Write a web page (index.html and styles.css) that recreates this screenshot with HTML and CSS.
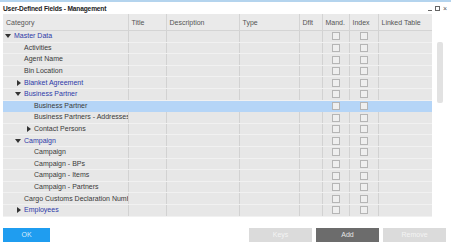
FILE: index.html
```html
<!DOCTYPE html>
<html lang="en">
<head>
    <meta charset="UTF-8">
    <meta name="viewport" content="width=device-width, initial-scale=1.0">
    <title>User-Defined Fields - Management</title>
    <link rel="stylesheet" href="styles.css">
</head>
<body>

<div class="titlebar">
    <span class="title">User-Defined Fields - Management</span>
    <span class="win-controls"><span class="wc-min"></span><span class="wc-max"></span><span class="wc-close">&#215;</span></span>
</div>

<div class="grid-area">
    <table class="udf-table">
        <colgroup>
            <col class="c-cat"><col class="c-title"><col class="c-desc"><col class="c-type">
            <col class="c-dflt"><col class="c-mand"><col class="c-index"><col class="c-linked">
        </colgroup>
        <thead>
            <tr>
                <th>Category</th><th>Title</th><th>Description</th><th>Type</th>
                <th>Dflt</th><th>Mand.</th><th>Index</th><th>Linked Table</th>
            </tr>
        </thead>
        <tbody>
            <tr><td class="cat lv0 parent"><span class="tg open"></span>Master Data</td><td></td><td></td><td></td><td></td><td class="ck"><span class="chk"></span></td><td class="ck"><span class="chk"></span></td><td></td></tr>
            <tr><td class="cat lv1"><span class="tg"></span>Activities</td><td></td><td></td><td></td><td></td><td class="ck"><span class="chk"></span></td><td class="ck"><span class="chk"></span></td><td></td></tr>
            <tr><td class="cat lv1"><span class="tg"></span>Agent Name</td><td></td><td></td><td></td><td></td><td class="ck"><span class="chk"></span></td><td class="ck"><span class="chk"></span></td><td></td></tr>
            <tr><td class="cat lv1"><span class="tg"></span>Bin Location</td><td></td><td></td><td></td><td></td><td class="ck"><span class="chk"></span></td><td class="ck"><span class="chk"></span></td><td></td></tr>
            <tr><td class="cat lv1 parent"><span class="tg closed"></span>Blanket Agreement</td><td></td><td></td><td></td><td></td><td class="ck"><span class="chk"></span></td><td class="ck"><span class="chk"></span></td><td></td></tr>
            <tr><td class="cat lv1 parent"><span class="tg open"></span>Business Partner</td><td></td><td></td><td></td><td></td><td class="ck"><span class="chk"></span></td><td class="ck"><span class="chk"></span></td><td></td></tr>
            <tr class="selected"><td class="cat lv2"><span class="tg"></span>Business Partner</td><td></td><td></td><td></td><td></td><td class="ck"><span class="chk"></span></td><td class="ck"><span class="chk"></span></td><td></td></tr>
            <tr><td class="cat lv2"><span class="tg"></span>Business Partners - Addresses</td><td></td><td></td><td></td><td></td><td class="ck"><span class="chk"></span></td><td class="ck"><span class="chk"></span></td><td></td></tr>
            <tr><td class="cat lv2"><span class="tg closed"></span>Contact Persons</td><td></td><td></td><td></td><td></td><td class="ck"><span class="chk"></span></td><td class="ck"><span class="chk"></span></td><td></td></tr>
            <tr><td class="cat lv1 parent"><span class="tg open"></span>Campaign</td><td></td><td></td><td></td><td></td><td class="ck"><span class="chk"></span></td><td class="ck"><span class="chk"></span></td><td></td></tr>
            <tr><td class="cat lv2"><span class="tg"></span>Campaign</td><td></td><td></td><td></td><td></td><td class="ck"><span class="chk"></span></td><td class="ck"><span class="chk"></span></td><td></td></tr>
            <tr><td class="cat lv2"><span class="tg"></span>Campaign - BPs</td><td></td><td></td><td></td><td></td><td class="ck"><span class="chk"></span></td><td class="ck"><span class="chk"></span></td><td></td></tr>
            <tr><td class="cat lv2"><span class="tg"></span>Campaign - Items</td><td></td><td></td><td></td><td></td><td class="ck"><span class="chk"></span></td><td class="ck"><span class="chk"></span></td><td></td></tr>
            <tr><td class="cat lv2"><span class="tg"></span>Campaign - Partners</td><td></td><td></td><td></td><td></td><td class="ck"><span class="chk"></span></td><td class="ck"><span class="chk"></span></td><td></td></tr>
            <tr><td class="cat lv1"><span class="tg"></span>Cargo Customs Declaration Numbers</td><td></td><td></td><td></td><td></td><td class="ck"><span class="chk"></span></td><td class="ck"><span class="chk"></span></td><td></td></tr>
            <tr><td class="cat lv1 parent"><span class="tg closed"></span>Employees</td><td></td><td></td><td></td><td></td><td class="ck"><span class="chk"></span></td><td class="ck"><span class="chk"></span></td><td></td></tr>
        </tbody>
    </table>
    <div class="scroll-track">
        <div class="scroll-thumb"></div>
    </div>
</div>

<div class="footer">
    <button class="btn btn-primary btn-ok">OK</button>
    <div class="btn-group">
        <button class="btn btn-disabled">Keys</button>
        <button class="btn btn-dark">Add</button>
        <button class="btn btn-disabled">Remove</button>
    </div>
</div>

</body>
</html>
```

FILE: styles.css
```css
body {
    margin: 0;
    padding: 0;
    background-color: white;
    font-family: "Liberation Sans", Arial, sans-serif;
    font-size: 7px;
    color: #3a3a3a;
    width: 451px;
    height: 247px;
    overflow: hidden;
}

/* title bar */
.titlebar {
    height: 12px;
    border-top: 2px solid #b4d4ee;
    display: flex;
    align-items: center;
    justify-content: space-between;
    padding: 0 4px 0 3px;
}

.title {
    font-weight: bold;
    font-size: 6.6px;
    letter-spacing: -0.15px;
    color: #222;
}

.win-controls {
    display: flex;
    align-items: center;
    gap: 3px;
    color: #555;
    font-size: 7px;
}

.wc-min {
    width: 4px;
    height: 4px;
    border-bottom: 1px solid #666;
}

.wc-max {
    width: 5px;
    height: 5px;
    border: 1px solid #666;
    box-sizing: border-box;
}

/* grid */
.grid-area {
    display: flex;
    padding-left: 3px;
}

.udf-table {
    width: 429px;
    flex: none;
    table-layout: fixed;
    border-collapse: collapse;
    background-color: #e7e7e7;
}

.c-cat { width: 125px; }
.c-title { width: 38px; }
.c-desc { width: 73px; }
.c-type { width: 60px; }
.c-dflt { width: 23px; }
.c-mand { width: 27px; }
.c-index { width: 29px; }
.c-linked { width: 54px; }

.udf-table th {
    height: 16px;
    padding: 0 0 0 3px;
    text-align: left;
    font-weight: normal;
    color: #555;
    background-color: #eaeaea;
    border-right: 1px solid #d4d4d4;
    border-bottom: 1px solid #d4d4d4;
    white-space: nowrap;
    overflow: hidden;
}

.udf-table td {
    height: 10.6px;
    line-height: 10px;
    padding: 0;
    border-right: 1px solid #d2d2d2;
    border-bottom: 1px solid #f1f1f1;
    white-space: nowrap;
    overflow: hidden;
}

.udf-table th:last-child,
.udf-table td:last-child {
    border-right: none;
}

.udf-table tr.selected td {
    background-color: #b5d5f7;
    border-right-color: #b5d5f7;
    border-bottom-color: #b5d5f7;
}

.cat {
    color: #3a3a3a;
}

.cat.parent {
    color: #2e3aa8;
}

.udf-table td.lv0 { padding-left: 2px; }
.udf-table td.lv1 { padding-left: 12px; }
.udf-table td.lv2 { padding-left: 22px; }

/* tree toggle */
.tg {
    display: inline-block;
    width: 9px;
    height: 6px;
    position: relative;
    vertical-align: -1px;
}

.tg.open::before {
    content: "";
    position: absolute;
    left: 0;
    top: 1px;
    border-left: 3px solid transparent;
    border-right: 3px solid transparent;
    border-top: 4px solid #333;
}

.tg.closed::before {
    content: "";
    position: absolute;
    left: 2px;
    top: 0;
    border-top: 3px solid transparent;
    border-bottom: 3px solid transparent;
    border-left: 4px solid #333;
}

/* checkboxes */
.ck {
    text-align: center;
}

.chk {
    display: inline-block;
    width: 8px;
    height: 8px;
    box-sizing: border-box;
    border: 1px solid #b5b5b5;
    background-color: #efefef;
    vertical-align: middle;
}

/* scrollbar */
.scroll-track {
    width: 19px;
}

.scroll-thumb {
    margin: 28px 0 0 5px;
    width: 6px;
    height: 61px;
    background-color: #e2e2e2;
    border-radius: 2px;
}

/* footer buttons */
.footer {
    display: flex;
    justify-content: space-between;
    align-items: center;
    margin-top: 11px;
    padding: 0 5px 0 3px;
}

.btn-group {
    display: flex;
    gap: 4px;
}

.btn {
    width: 63px;
    height: 14px;
    border: none;
    border-radius: 0;
    padding: 0;
    font-family: "Liberation Sans", Arial, sans-serif;
    font-size: 7px;
    color: white;
    cursor: pointer;
}

.btn-ok {
    width: 47px;
}

.btn-primary {
    background-color: #1f9df0;
    color: #d6ecfb;
}

.btn-disabled {
    background-color: #dbdbdb;
    color: #f4f4f4;
}

.btn-dark {
    background-color: #6c6c6c;
    color: #e6e6e6;
}
```
